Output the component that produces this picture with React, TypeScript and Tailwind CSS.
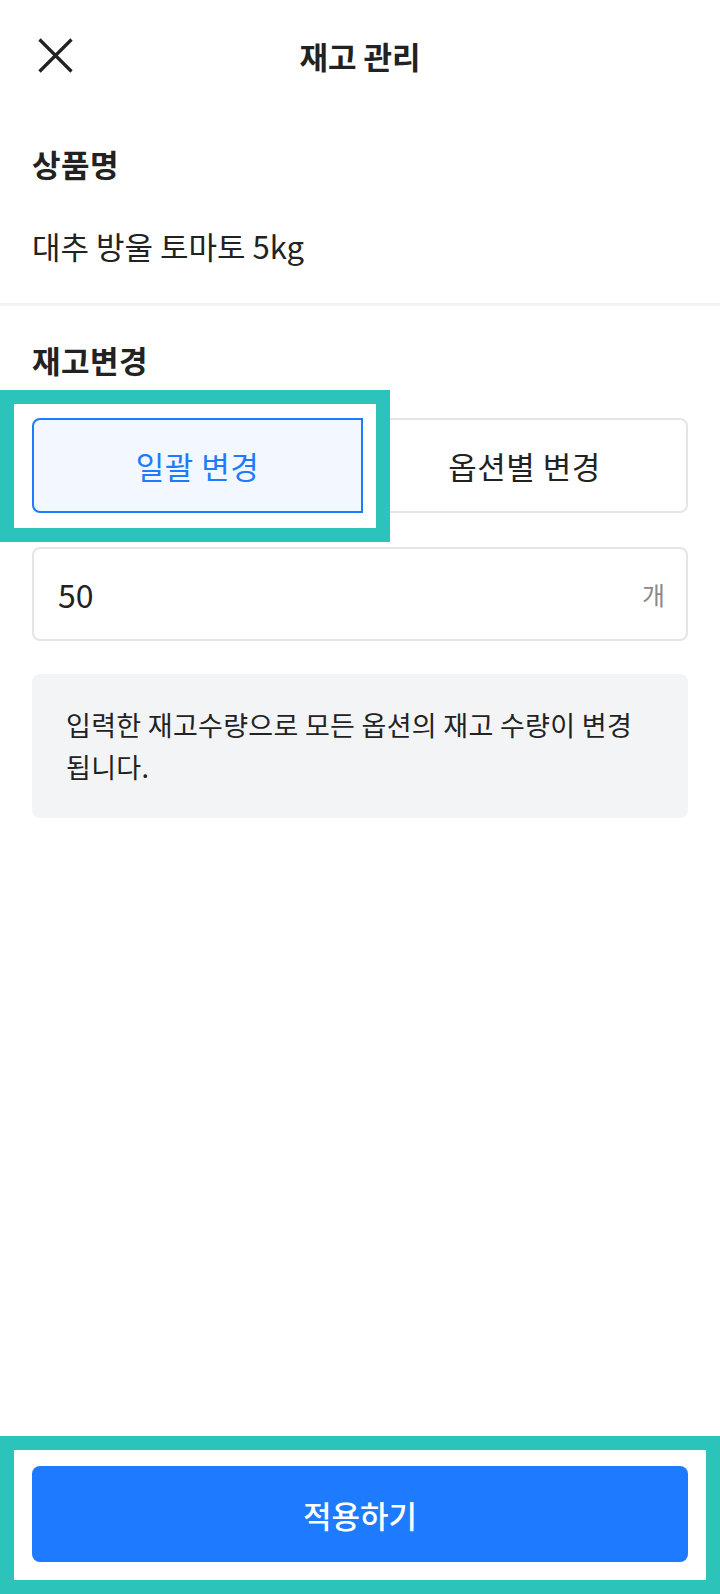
import React from "react";

export default function App() {
  return (
    <div
      className="relative flex min-h-[1594px] w-full flex-col bg-white text-[#222222]"
      style={{ fontFamily: '"Noto Sans CJK KR", "Noto Sans", sans-serif' }}
    >
      {/* Header */}
      <header className="grid h-[111px] grid-cols-[1fr_auto_1fr] items-center px-[38px]">
        <div className="flex items-center">
          <svg width="35" height="35" viewBox="0 0 35 35" fill="none">
            <path d="M1.5 1.5 L33.5 33.5 M33.5 1.5 L1.5 33.5" stroke="#222222" strokeWidth="3.3" />
          </svg>
        </div>
        <h1 className="text-[31px] font-bold leading-[31px]">재고 관리</h1>
        <div />
      </header>

      {/* Product name */}
      <section className="px-8 pt-[37px]">
        <h2 className="text-[31px] font-bold leading-[31px] tracking-[0.5px]">상품명</h2>
        <p className="mt-[51px] text-[31px] leading-[31px]">대추 방울 토마토 5kg</p>
      </section>

      <div className="mt-[42px] h-[3px] w-full bg-[#f1f1f1]" />

      {/* Stock change */}
      <section className="px-8 pt-[38px]">
        <h2 className="text-[31px] font-bold leading-[31px] tracking-[0.5px]">재고변경</h2>

        <div className="mt-[43px] grid h-[95px] grid-cols-[331px_1fr]">
          <button className="flex items-center justify-center rounded-l-[8px] border-2 border-[#1e7bff] bg-[#f3f7ff] text-[31px] leading-[31px] tracking-[0.5px] text-[#1e7bff]">
            일괄 변경
          </button>
          <button className="flex items-center justify-center rounded-r-[8px] border-2 border-l-0 border-[#e5e5e5] bg-white text-[31px] leading-[31px] tracking-[0.5px] text-[#222222]">
            옵션별 변경
          </button>
        </div>

        <div className="mt-[34px] flex h-[94px] items-center justify-between rounded-[8px] border-2 border-[#e5e5e5] pl-[24px] pr-[21px]">
          <span className="text-[32px] leading-[32px]">50</span>
          <span className="text-[25px] leading-[25px] text-[#8a8a8a]">개</span>
        </div>

        <div className="mt-[33px] rounded-[8px] bg-[#f3f4f6] px-[34px] pb-[30px] pt-[30px]">
          <p className="text-[27px] leading-[42px] tracking-[0.3px] text-[#222222]">
            입력한 재고수량으로 모든 옵션의 재고 수량이 변경
            <br />
            됩니다.
          </p>
        </div>
      </section>

      {/* Bottom button */}
      <div className="mt-auto px-8 pb-8">
        <button className="flex h-[96px] w-full items-center justify-center rounded-[8px] bg-[#1e7bff] text-[31px] font-medium leading-[31px] text-white">
          적용하기
        </button>
      </div>

      {/* Annotation overlays */}
      <div className="pointer-events-none absolute left-0 top-[390px] h-[152px] w-[390px] border-[14px] border-[#2cc3bb]">
        <div className="h-full w-full border-b-[14px] border-l-[14px] border-r-[13px] border-t-[14px] border-white" />
      </div>
      <div className="pointer-events-none absolute bottom-0 left-0 h-[158px] w-[720px] border-[14px] border-[#2cc3bb]" />
    </div>
  );
}
